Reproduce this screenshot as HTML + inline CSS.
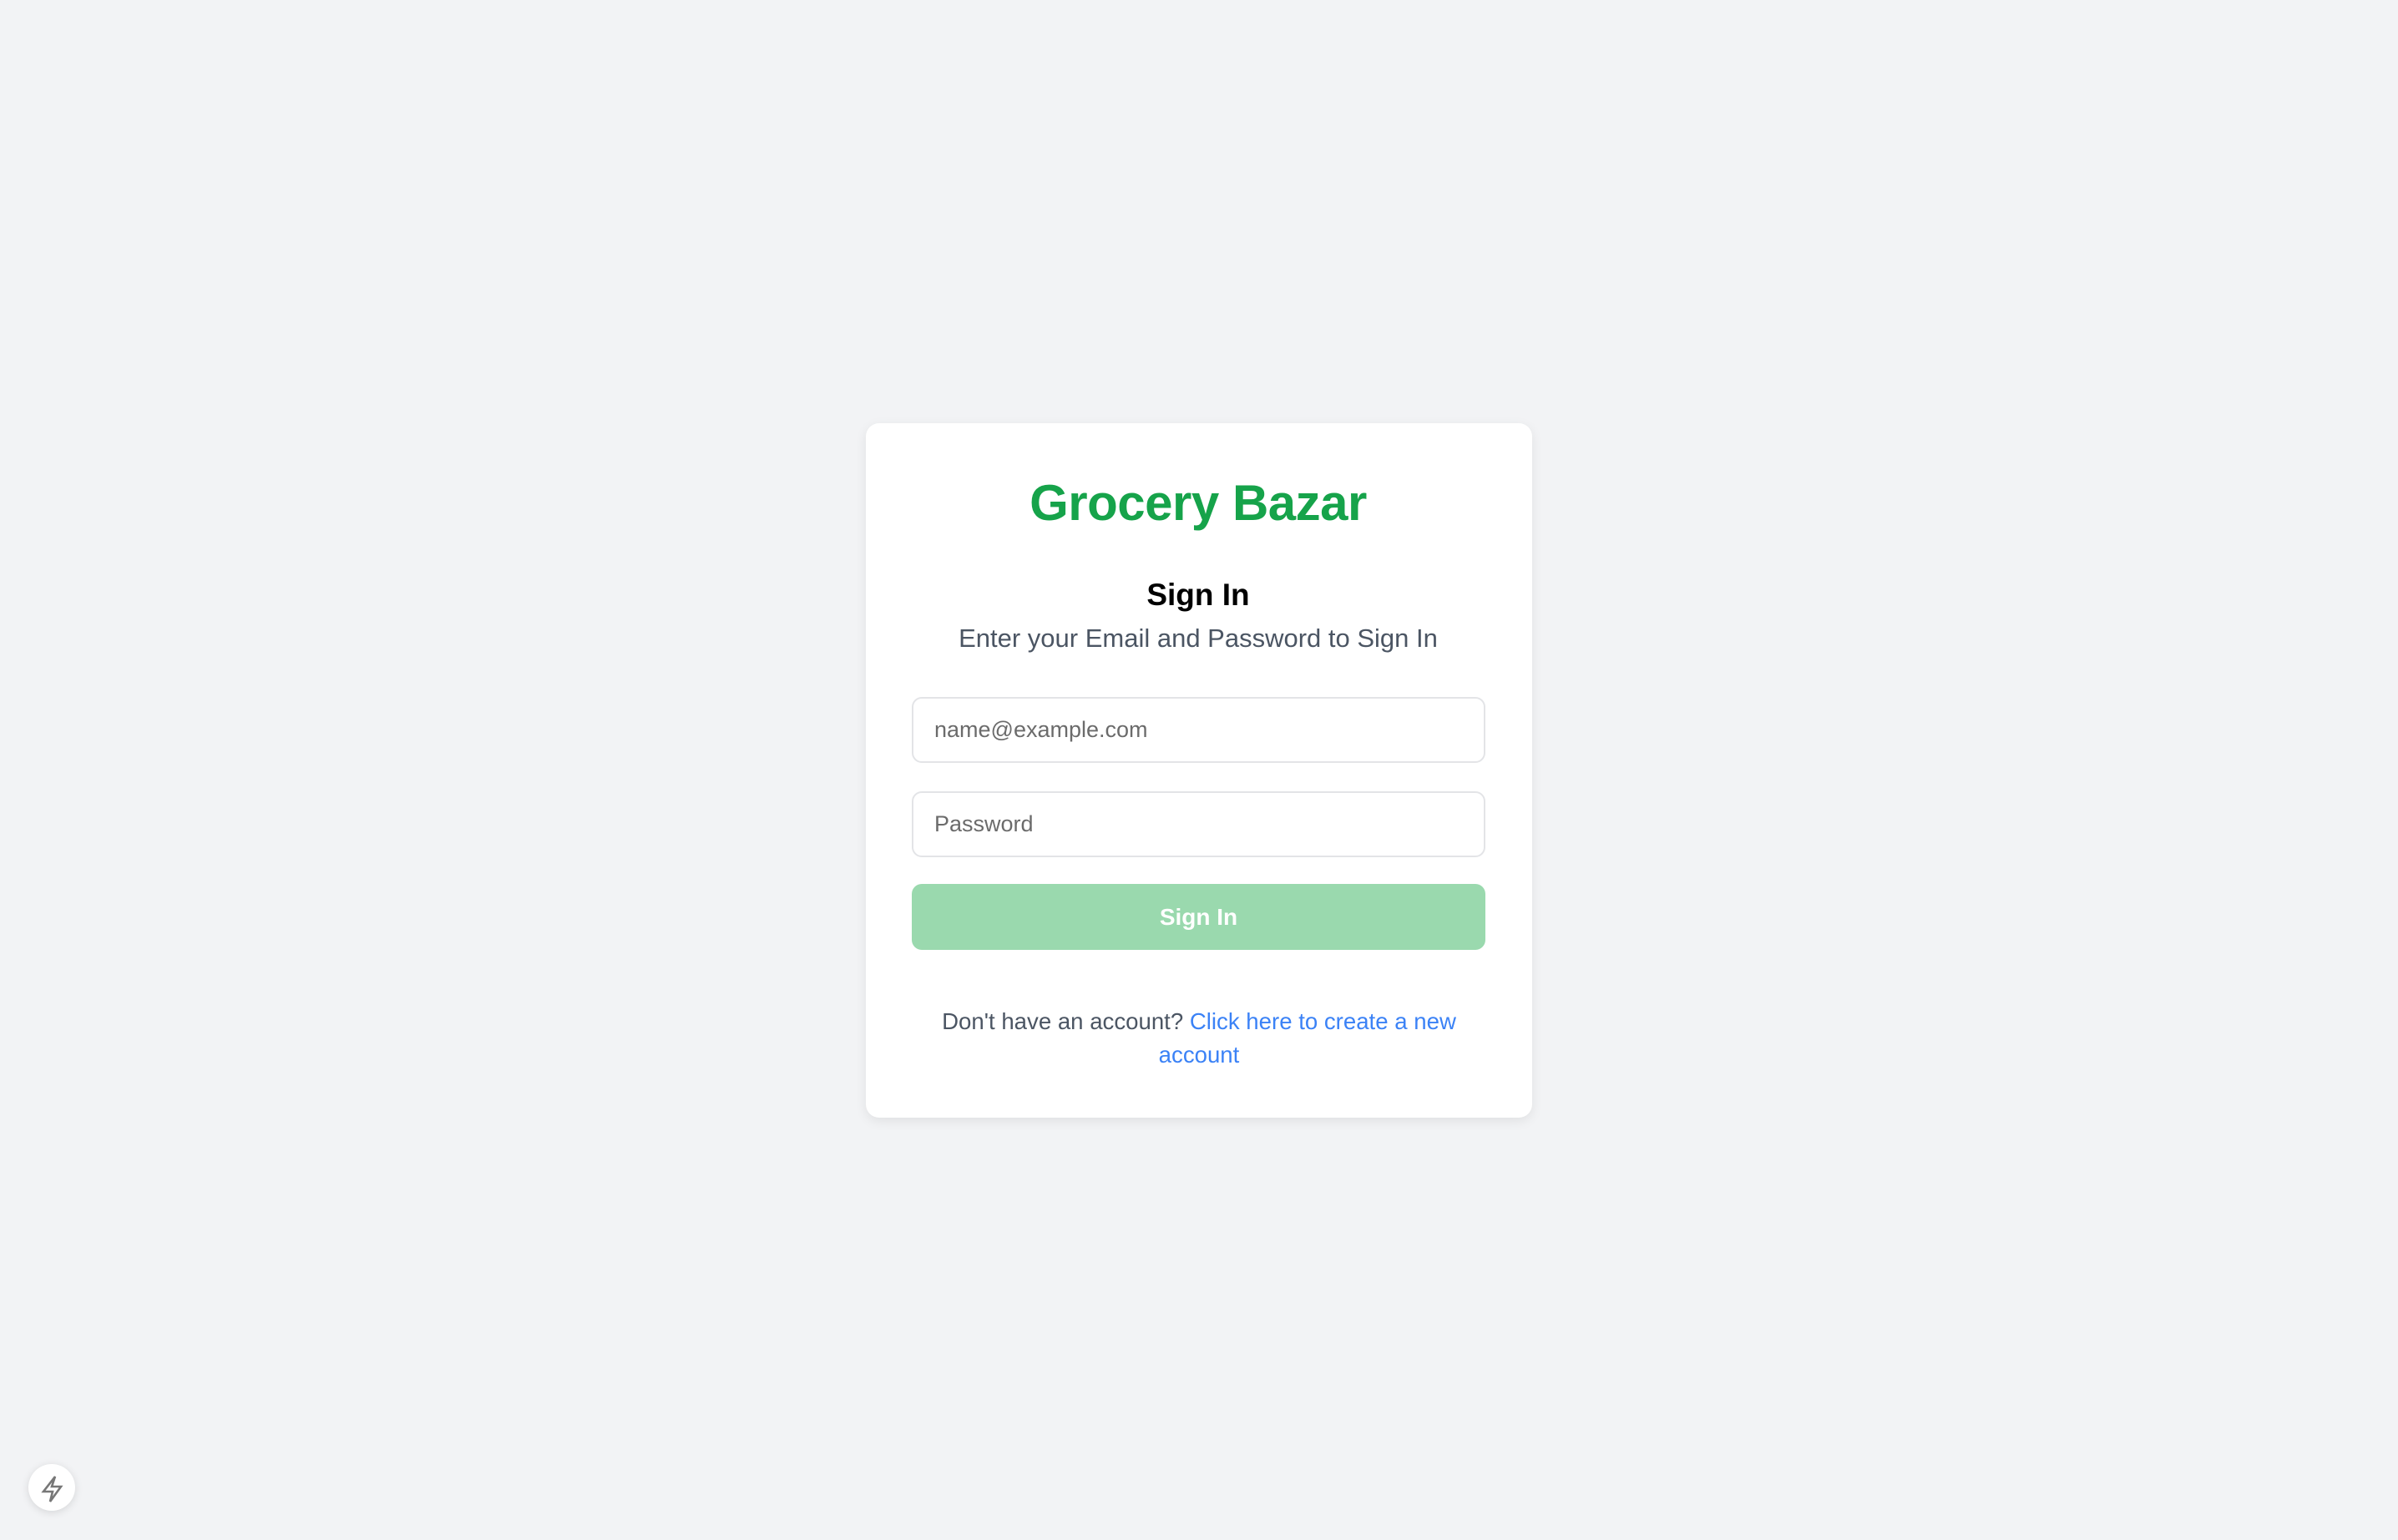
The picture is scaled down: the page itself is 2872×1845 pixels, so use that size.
<!DOCTYPE html>
<html><head><meta charset="utf-8"><style>
*{box-sizing:border-box;margin:0;padding:0}
html,body{width:2872px;height:1845px;background:#f2f3f5;font-family:"Liberation Sans",sans-serif;overflow:hidden;position:relative}
.card{position:absolute;left:1037px;top:507px;width:798px;height:832px;background:#fff;border-radius:16px;box-shadow:0 4px 14px rgba(0,0,0,.08)}
.t{position:absolute;left:0;width:2870px;text-align:center;white-space:nowrap}
.logo{top:568px;font-size:60px;font-weight:bold;color:#16a34a;letter-spacing:-0.5px}
.h{top:692px;font-size:37px;font-weight:bold;color:#000}
.sub{top:747px;font-size:31px;color:#4b5563}
.inp{position:absolute;left:1092px;width:687px;height:79px;border:2px solid #e3e4e7;border-radius:12px;background:#fff;font-size:27px;color:#6b6b6b;padding-left:25px;line-height:75px}
.btn{position:absolute;left:1092px;top:1059px;width:687px;height:79px;border-radius:12px;background:#9ad9ae;color:#fff;font-size:28px;font-weight:bold;text-align:center;line-height:79px}
.ft{position:absolute;left:1096px;width:680px;top:1204px;text-align:center;font-size:27.6px;line-height:40px;color:#4b5563}
.ft span{color:#3b82f6}
.bolt{position:absolute;left:34px;top:1754px;width:56px;height:56px;border-radius:50%;background:#fff;box-shadow:0 2px 10px rgba(0,0,0,.12)}
</style></head><body>
<div class="card"></div>
<div class="t logo">Grocery Bazar</div>
<div class="t h">Sign In</div>
<div class="t sub">Enter your Email and Password to Sign In</div>
<div class="inp" style="top:835px">name@example.com</div>
<div class="inp" style="top:948px">Password</div>
<div class="btn">Sign In</div>
<div class="ft">Don't have an account? <span>Click here to create a new account</span></div>
<div class="bolt"><svg width="56" height="56" viewBox="0 0 56 56"><path d="M32 15 L18 33 H29 L26 45 L39 27 H28 Z" fill="none" stroke="#777" stroke-width="2.6" stroke-linejoin="miter"/></svg></div>
</body></html>
